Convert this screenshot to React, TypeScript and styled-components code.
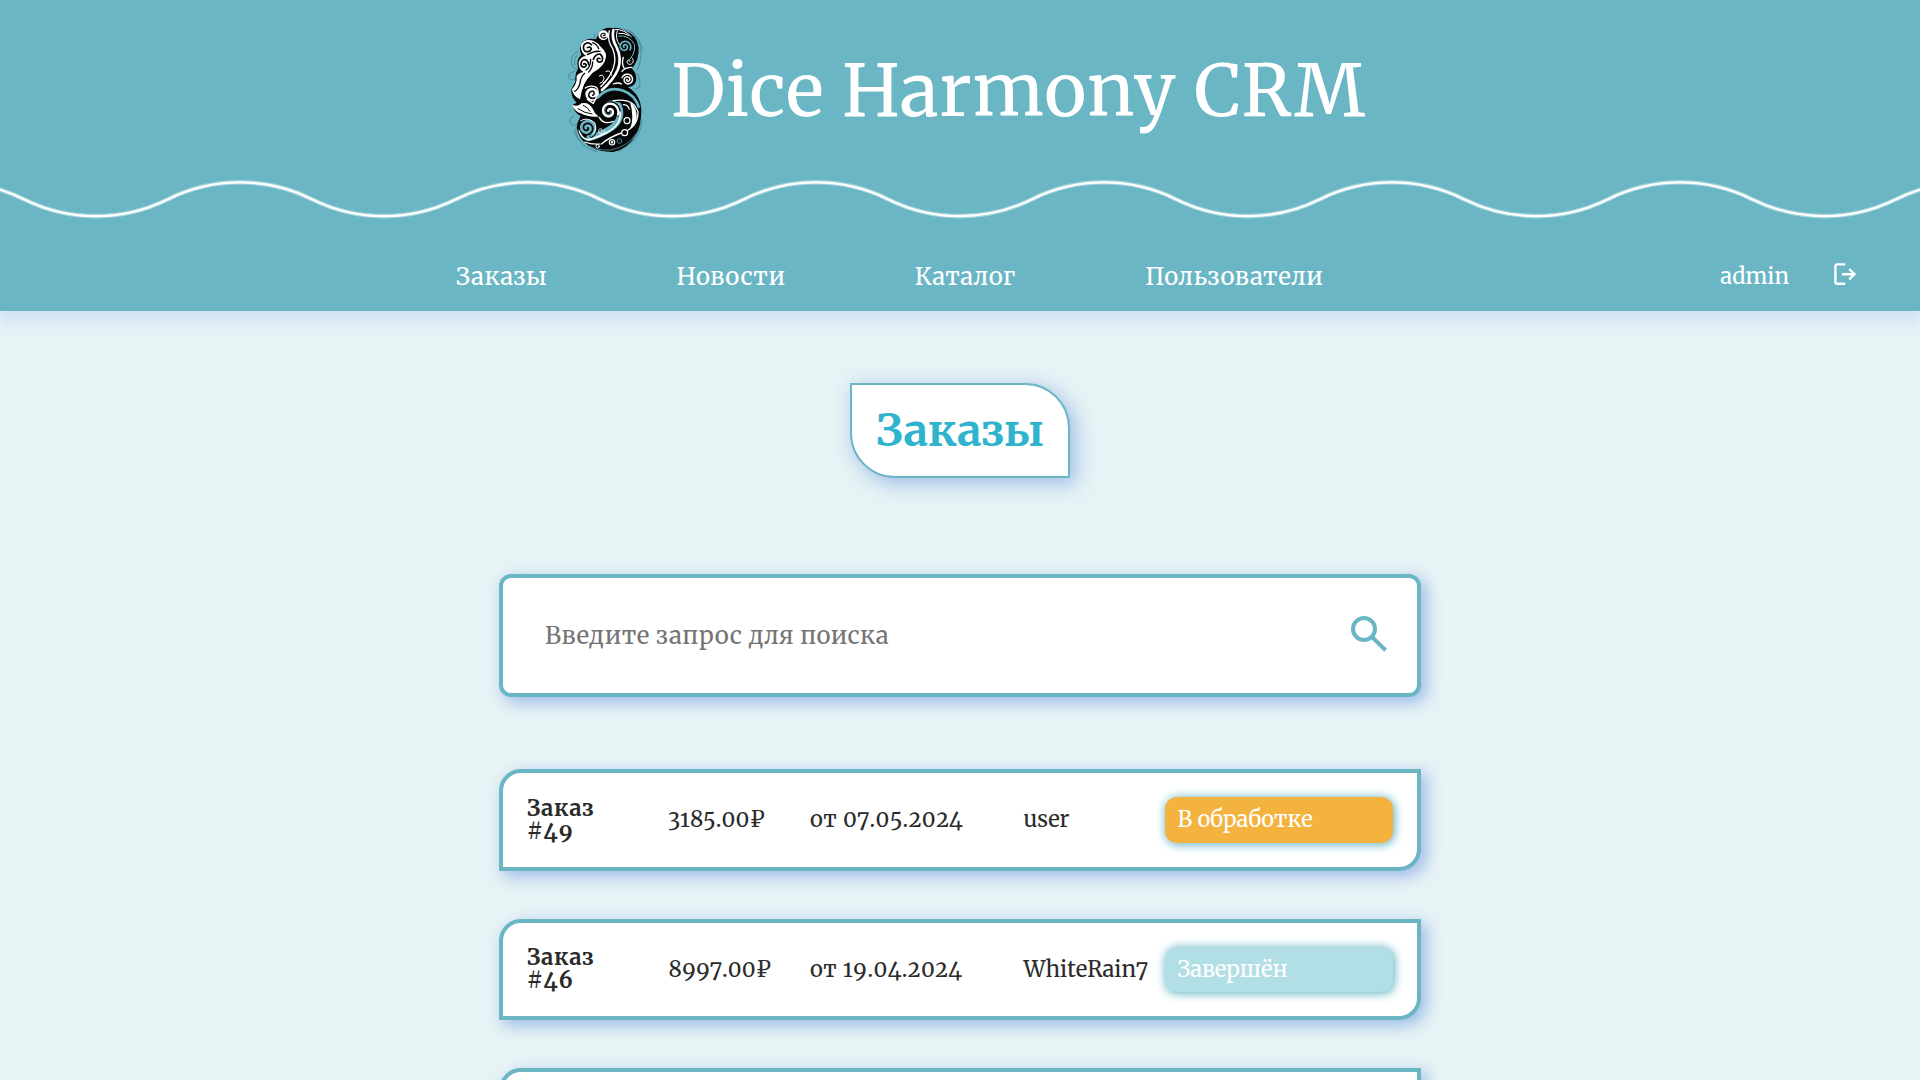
import React from 'react';
import styled, { createGlobalStyle } from 'styled-components';

const teal = '#6ab6c5';
const page = '#e7f3f5';
const ink = '#050708';

const GlobalStyle = createGlobalStyle`
  *, *::before, *::after { box-sizing: border-box; }
  html, body { margin: 0; height: 100%; overflow: hidden; }
  body {
    background: ${page};
    color: #2b2b2b;
    font-family: Merriweather, "DejaVu Serif Condensed", "Liberation Serif", serif;
    font-weight: 370;
    font-variant-numeric: oldstyle-nums;
  }
`;

const Page = styled.div`
  height: 1080px;
  overflow: hidden;
  display: flex;
  flex-direction: column;
`;

const Header = styled.header`
  flex: none;
  height: 311px;
  background: ${teal};
  color: #fff;
  box-shadow: 0 12px 12px #d3e3f5;
`;

const Brand = styled.div`
  height: 180px;
  display: flex;
  justify-content: center;
  align-items: center;
  gap: 1px;
`;

const BrandName = styled.span`
  width: 699px;
  padding-top: 1px;
  font-size: 72px;
  line-height: 90px;
  letter-spacing: 0.7px;
  white-space: nowrap;
`;

const WaveSvg = styled.svg`
  display: block;
  width: 100%;
  height: 39px;
`;

const NavBar = styled.nav`
  height: 92px;
  padding: 23px 64px 0 456px;
  display: flex;
  align-items: center;
  justify-content: space-between;
`;

const NavLinks = styled.div`
  display: flex;
  gap: 130px;
`;

const NavLink = styled.a`
  font-size: 24px;
  line-height: 32px;
  letter-spacing: 0.56px;
  margin-right: -0.7px;
`;

const UserBox = styled.div`
  display: flex;
  align-items: center;
  gap: 45px;
  font-size: 22px;
  line-height: 30px;
  padding-bottom: 1px;
`;

const LogoutSvg = styled.svg`
  margin-bottom: 4px;
`;

const Main = styled.main`
  flex: 1;
  display: flex;
  flex-direction: column;
  align-items: center;
  padding-top: 72px;
`;

const Heading = styled.h1`
  flex: none;
  margin: 0 0 96px;
  width: 220px;
  height: 95px;
  display: flex;
  align-items: center;
  justify-content: center;
  background: #fff;
  border: 2px solid ${teal};
  border-radius: 0 45px 0 45px;
  box-shadow: 5px 5px 20px 1px #a0bee9;
  color: #30b3cc;
  font-size: 44px;
  font-weight: 700;
`;

const SearchBox = styled.label`
  flex: none;
  width: 922px;
  height: 123px;
  margin-bottom: 72px;
  padding: 0 23px 3px 42px;
  display: flex;
  align-items: center;
  background: #fff;
  border: 4px solid ${teal};
  border-radius: 12px;
  box-shadow: 5px 5px 15px 1px #a0bee9;
  color: ${teal};
`;

const SearchInput = styled.input`
  flex: 1;
  height: 60px;
  padding: 2px 0 0;
  border: 0;
  outline: 0;
  background: none;
  font: inherit;
  font-size: 24px;
  letter-spacing: 0.5px;
  &::placeholder { color: #757575; opacity: 1; }
`;

const Orders = styled.div`
  display: flex;
  flex-direction: column;
  gap: 48px;
`;

const OrderRow = styled.article`
  flex: none;
  width: 922px;
  height: 101.6px;
  padding: 0 24px;
  display: grid;
  grid-template-columns: 141.5px 141.5px 213.5px 141.5px 228px;
  align-items: center;
  background: #fff;
  border: 4px solid ${teal};
  border-radius: 22px 0 22px 0;
  box-shadow: 5px 5px 15px 1px #a0bee9;
  font-size: 22px;
  line-height: 29px;
  font-kerning: none;
  white-space: nowrap;
`;

const OrderTitle = styled.h2`
  margin: 0;
  width: 90px;
  font-size: 22px;
  line-height: 23px;
  font-weight: 700;
  letter-spacing: 0.7px;
  white-space: normal;
`;

const Cell = styled.span<{ $spacing?: number }>`
  letter-spacing: ${(p) => p.$spacing ?? 0}px;
`;

const Status = styled.span<{ $color: string }>`
  height: 45.6px;
  padding: 0 12.5px;
  display: flex;
  align-items: center;
  border-radius: 12px;
  background: ${(p) => p.$color};
  box-shadow: 1px 1px 10px 1px ${teal};
  color: #fff;
`;

/* Spiral that tightens towards its centre. */
function curl(cx: number, cy: number, r: number, turns: number, start: number, dir: 1 | -1 = 1) {
  const steps = Math.round(turns * 24);
  let d = '';
  for (let i = 0; i <= steps; i++) {
    const t = i / steps;
    const a = (start * Math.PI) / 180 + dir * t * turns * Math.PI * 2;
    const rr = r * (1 - 0.88 * t);
    d += `${i ? 'L' : 'M'}${(cx + rr * Math.cos(a)).toFixed(1)} ${(cy + rr * Math.sin(a)).toFixed(1)}`;
  }
  return d;
}

function Logo() {
  return (
    <svg width="120" height="160" viewBox="0 0 360 480" fill="none" strokeLinecap="round" strokeLinejoin="round">
      <g stroke="#2f616c" strokeWidth="2" opacity="0.75">
        <path d="M218 56Q262 66 273 112Q276 152 262 180M240 62Q272 86 276 118" />
        <path d="M84 124Q60 134 64 160Q68 178 84 178M82 136Q70 146 74 164" />
        <path d="M74 184Q54 188 56 204Q64 214 76 206M262 190Q274 214 268 232L254 238" />
        <path d="M72 318Q58 322 60 336Q68 350 80 344M64 300L58 306M276 330Q276 372 240 404M272 340Q258 398 206 424" />
        <path d="M72 366Q92 412 142 426M80 350Q70 366 92 392M134 72V84" />
      </g>
      <path
        fill={ink}
        d="M146 70Q160 50 188 54Q206 50 224 62Q260 72 266 112Q268 150 246 176Q262 192 258 214Q252 230 234 232Q272 254 274 302Q274 348 256 376Q236 416 190 426Q130 428 100 394Q76 366 82 340L92 318Q70 306 68 284L80 278Q62 262 64 238L76 216Q74 190 84 178L82 158Q84 142 94 136Q84 112 98 96Q114 82 138 88Z"
      />
      {/* upper left plumes */}
      <path
        fill="#fff"
        d="M92 106Q100 88 120 90Q140 94 150 108Q162 118 168 132Q170 156 158 172Q146 188 120 202Q98 218 90 268Q68 258 66 238Q82 222 80 198Q84 190 100 186Q84 176 86 156Q92 140 108 138Q92 128 92 106Z"
      />
      <g stroke={ink} strokeWidth="5">
        <path d="M124 104Q114 94 103 103Q96 116 106 124Q120 128 124 116Q120 108 112 113" />
        <path d="M112 134Q132 122 150 124M128 98Q142 104 146 116" strokeWidth="4" />
        <path d="M116 164Q114 148 101 149Q90 156 94 168Q104 176 109 166Q106 158 101 162" />
        <path d="M130 148Q136 132 150 132Q162 142 156 154Q144 160 141 150Q144 142 150 146" />
        <path d="M122 148Q122 172 108 180M128 156Q128 174 116 186" strokeWidth="4" />
        <path d="M104 190Q92 200 90 220Q84 240 74 244" strokeWidth="4" />
      </g>
      <path fill={ink} d="M128 188Q166 168 168 140Q184 166 182 186Q166 226 124 222Q104 232 98 262Q90 226 128 188Z" />
      {/* crest and flowing ribbons */}
      <circle cx="160" cy="76" r="15" fill="#fff" />
      <path d="M168 82Q158 88 152 78Q154 68 164 70Q168 76 160 77M148 88Q158 96 170 90" stroke={ink} strokeWidth="3.5" />
      <g stroke="#fff">
        <path d="M178 62Q170 90 188 116Q200 146 190 174Q180 204 152 230" strokeWidth="4" />
        <path d="M190 60Q184 86 200 112Q216 144 204 178Q192 208 156 240" strokeWidth="8" />
        <path d="M202 62Q194 84 208 104M196 58Q224 58 244 80M206 70Q222 68 236 76" strokeWidth="3" />
        <path d="M148 198Q160 190 162 206Q160 218 150 220M168 184Q184 178 184 196M172 208Q168 214 160 218" strokeWidth="3" />
        <path d={curl(238, 154, 13, 1.2, 300)} strokeWidth="3" />
        <path d="M220 142Q214 160 222 174M216 184Q224 172 246 172" strokeWidth="4" />
        <path d={curl(233, 209, 18, 2, 200)} strokeWidth="4.5" />
        <path d="M190 222Q206 216 214 222" strokeWidth="4" />
      </g>
      <g stroke={teal}>
        <path d={curl(224, 110, 19, 1.7, 30, -1)} strokeWidth="5" />
        <path d="M206 78Q238 74 254 104Q256 138 230 156" strokeWidth="3" />
      </g>
      {/* eye and leaf */}
      <circle cx="126" cy="253" r="20" fill="#fff" />
      <path d="M138 262Q124 270 116 258Q116 242 130 244Q136 252 128 256M104 238Q114 226 130 228" stroke={ink} strokeWidth="4.5" />
      <path d="M106 234Q120 224 140 232Q146 240 144 252L130 280L112 268" stroke="#fff" strokeWidth="4" />
      <path fill="#fff" d="M66 284Q84 292 94 280Q116 274 128 296Q134 312 146 320Q112 322 92 310Q74 304 66 284Z" />
      <path d="M84 296Q104 310 126 312M100 286Q116 294 120 304" stroke={ink} strokeWidth="3" />
      {/* lower lobe */}
      <g stroke={teal}>
        <path d="M144 262Q176 226 220 242Q254 254 266 290" strokeWidth="8" />
        <path d="M206 286Q222 326 184 354Q150 376 118 384" strokeWidth="18" />
      </g>
      <path d="M142 306Q146 268 184 262Q230 262 240 300" stroke={ink} strokeWidth="6" />
      <path d={curl(178, 304, 36, 0.8, 0, -1)} stroke={teal} strokeWidth="11" />
      <path d={curl(178, 304, 29, 1.7, 20, -1)} stroke={ink} strokeWidth="12" />
      <g stroke="#fff">
        <path d={curl(178, 304, 28, 1.5, 20, -1)} strokeWidth="7" />
        <path d="M148 322Q160 346 190 334" strokeWidth="4" />
        <path d="M210 306Q216 344 170 368Q138 384 112 390Q92 382 88 362" strokeWidth="5" />
        <path d="M190 272Q250 262 264 306Q264 350 222 366Q180 380 154 402" strokeWidth="4" />
      </g>
      <path d="M240 276Q262 292 260 326Q256 346 240 356Q254 326 240 276Z" fill="#fff" />
      <path d={curl(111, 354, 27, 1.8, 60, -1)} stroke={ink} strokeWidth="12" />
      <path d={curl(111, 354, 26, 1.7, 60, -1)} stroke={teal} strokeWidth="8" />
      <path d="M92 332Q112 320 134 338Q142 356 130 372" stroke="#fff" strokeWidth="3" />
      <g stroke="#fff" strokeWidth="3.5">
        <circle cx="231" cy="332" r="9" fill={ink} />
        <circle cx="224" cy="368" r="9" fill={ink} />
        <circle cx="186" cy="397" r="8" />
        <circle cx="186" cy="397" r="2" />
        <circle cx="143" cy="409" r="5" strokeWidth="3" />
        <path d={curl(153, 362, 11, 1.3, 0)} strokeWidth="3" />
        <path d="M220 284Q234 284 238 298M104 396Q124 404 150 402" />
      </g>
      <circle cx="208" cy="393" r="7" stroke={teal} strokeWidth="2" />
      <path d="M96 396Q132 424 184 420Q238 406 256 374" stroke={teal} strokeWidth="2" />
    </svg>
  );
}

const wavePath = (() => {
  let d = 'M-120 19.2';
  for (let i = 0; i < 15; i++) d += `a162 162 0 0 ${i % 2 ? 0 : 1} 144 0`;
  return d;
})();

function Wave() {
  return (
    <WaveSvg viewBox="0 0 1920 39" fill="none" stroke="#fff">
      <path d={wavePath} strokeWidth="4.6" opacity="0.4" />
      <path d={wavePath} strokeWidth="2.2" />
    </WaveSvg>
  );
}

function LogoutIcon() {
  return (
    <LogoutSvg width="22" height="22" viewBox="0 0 22 22" fill="none" stroke="#fff" strokeWidth="2.4">
      <path d="M11.2 1.4H3A1.6 1.6 0 0 0 1.4 3V19.2A1.6 1.6 0 0 0 3 20.8H11.2M8 11.2H20.5M15.2 6L20.4 11.2L15.2 16.4" />
    </LogoutSvg>
  );
}

function SearchIcon() {
  return (
    <svg width="49" height="49" viewBox="0 0 49 49" fill="none" stroke={teal} strokeWidth="4">
      <circle cx="19" cy="19" r="11" />
      <path d="M26.8 26.8L40.6 40.2" />
    </svg>
  );
}

const nav = ['Заказы', 'Новости', 'Каталог', 'Пользователи'];

const orders = [
  { id: 49, sum: '3185.00₽', date: '07.05.2024', user: 'user', status: 'В обработке', color: '#f3b33e' },
  { id: 46, sum: '8997.00₽', date: '19.04.2024', user: 'WhiteRain7', status: 'Завершён', color: '#b2dee5' },
];

export default function App() {
  return (
    <Page>
      <GlobalStyle />
      <Header>
        <Brand>
          <Logo />
          <BrandName>Dice Harmony CRM</BrandName>
        </Brand>
        <Wave />
        <NavBar>
          <NavLinks>
            {nav.map((n) => (
              <NavLink key={n}>{n}</NavLink>
            ))}
          </NavLinks>
          <UserBox>
            <span>admin</span>
            <LogoutIcon />
          </UserBox>
        </NavBar>
      </Header>
      <Main>
        <Heading>Заказы</Heading>
        <SearchBox>
          <SearchInput placeholder="Введите запрос для поиска" />
          <SearchIcon />
        </SearchBox>
        <Orders>
          {orders.map((o) => (
            <OrderRow key={o.id}>
              <OrderTitle>Заказ #{o.id}</OrderTitle>
              <Cell $spacing={0.15}>{o.sum}</Cell>
              <Cell $spacing={0.5}>от {o.date}</Cell>
              <Cell>{o.user}</Cell>
              <Status $color={o.color}>{o.status}</Status>
            </OrderRow>
          ))}
          <OrderRow />
        </Orders>
      </Main>
    </Page>
  );
}
